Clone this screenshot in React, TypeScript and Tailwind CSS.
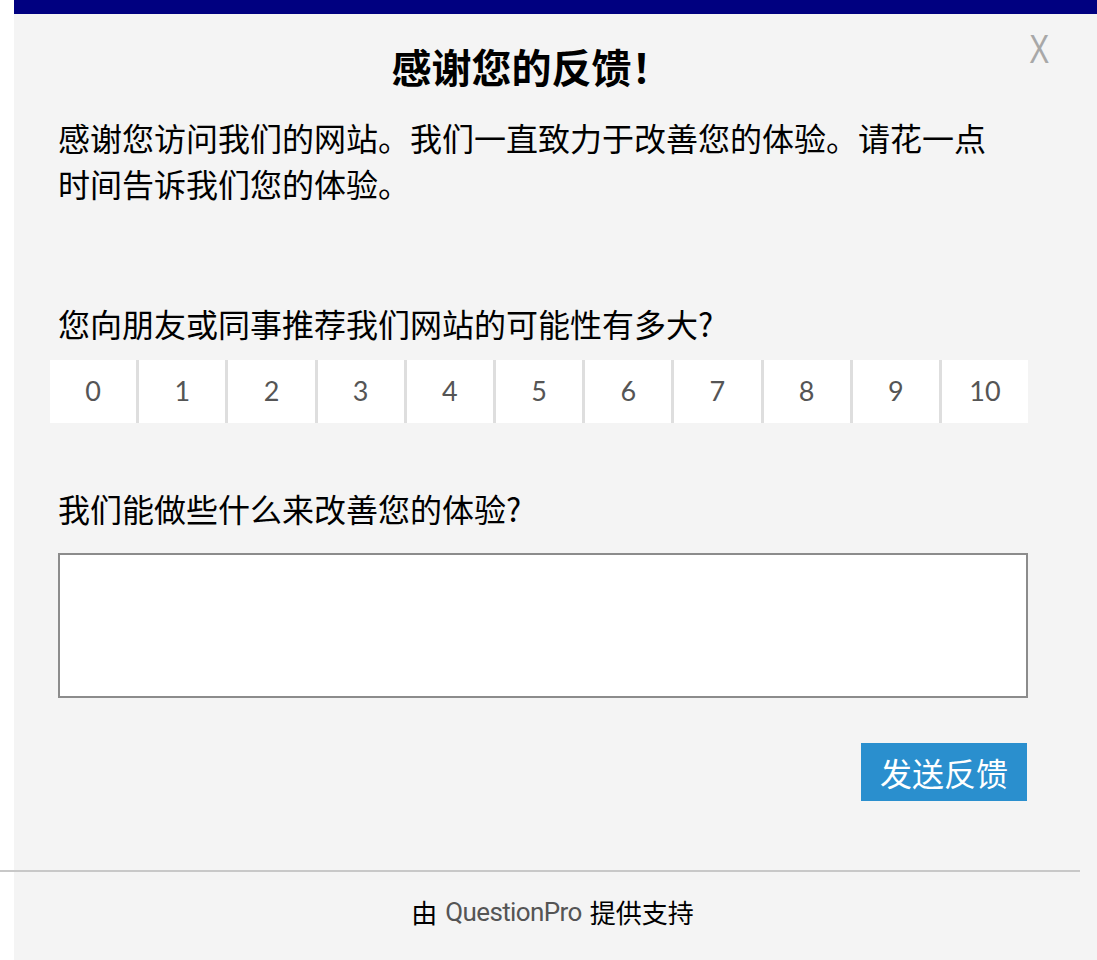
const cjk = "font-['Noto_Sans_CJK_SC','Noto_Sans',sans-serif]"

const scores = [0, 1, 2, 3, 4, 5, 6, 7, 8, 9, 10]

export default function App(): JSX.Element {
  return (
    <div className={`min-h-screen bg-white text-black ${cjk}`}>
      <div className="ml-[14px] min-h-[960px] bg-[#f4f4f4]">
        <div className="h-[14px] bg-[#000080]" />

        {/* header */}
        <div className="relative">
          <h1 className="mt-[28px] pr-[48px] text-center text-[40px] font-bold leading-[48px]">感谢您的反馈！</h1>
          <button className="absolute right-[44px] top-[-13px] origin-center scale-x-75 font-['Liberation_Sans',sans-serif] text-[40px] font-normal leading-[40px] text-[#a8a8a8]">
            X
          </button>
        </div>

        <div className="pl-[44px]">
          <p className="mt-[24px] max-w-[944px] text-[32px] leading-[46px]">
            感谢您访问我们的网站。我们一直致力于改善您的体验。请花一点时间告诉我们您的体验。
          </p>

          <p className="mt-[94px] text-[32px] leading-[46px]">您向朋友或同事推荐我们网站的可能性有多大?</p>

          <div className="-ml-[8px] mt-[14px] flex h-[63px] w-[978px] bg-white">
            {scores.map((n) => (
              <button
                key={n}
                className={`flex flex-1 items-center justify-center font-['Lato',sans-serif] text-[27px] text-[#555] ${
                  n === 0 ? '' : 'border-l-[3px] border-[#dedede]'
                }`}
              >
                {n}
              </button>
            ))}
          </div>

          <p className="mt-[62px] text-[32px] leading-[46px]">我们能做些什么来改善您的体验?</p>

          <textarea className="mt-[22px] block h-[145px] w-[970px] resize-none border-2 border-[#8c8c8c] bg-white outline-none" />

          <div className="flex w-[969px] justify-end">
            <button className="mt-[45px] h-[58px] w-[166px] bg-[#2a8fce] text-[32px] leading-none text-white">发送反馈</button>
          </div>
        </div>

        <div className="-ml-[14px] mt-[69px] h-[2px] w-[1080px] bg-[#c8c8c8]" />

        <div className="mt-[20px] flex items-center justify-center pr-[6px] text-[26px] leading-[40px]">
          <span>由</span>
          <span className="mx-[8px] font-['Roboto',sans-serif] tracking-[-0.6px] text-[#555]">QuestionPro</span>
          <span>提供支持</span>
        </div>
      </div>
    </div>
  )
}
